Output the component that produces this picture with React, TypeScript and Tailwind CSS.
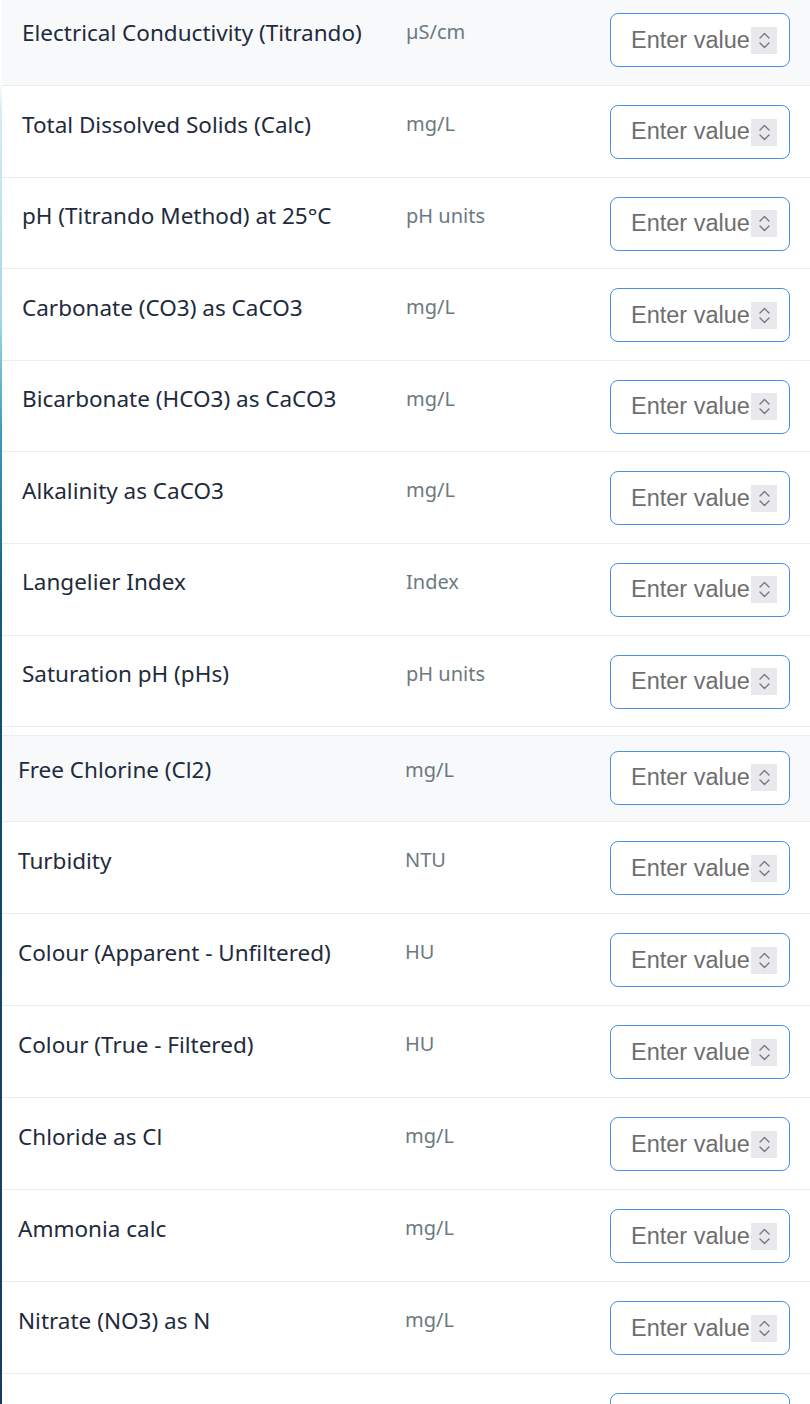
const groupOne: [string, string][] = [
  ['Electrical Conductivity (Titrando)', 'µS/cm'],
  ['Total Dissolved Solids (Calc)', 'mg/L'],
  ['pH (Titrando Method) at 25°C', 'pH units'],
  ['Carbonate (CO3) as CaCO3', 'mg/L'],
  ['Bicarbonate (HCO3) as CaCO3', 'mg/L'],
  ['Alkalinity as CaCO3', 'mg/L'],
  ['Langelier Index', 'Index'],
  ['Saturation pH (pHs)', 'pH units'],
];

const groupTwo: [string, string][] = [
  ['Free Chlorine (Cl2)', 'mg/L'],
  ['Turbidity', 'NTU'],
  ['Colour (Apparent - Unfiltered)', 'HU'],
  ['Colour (True - Filtered)', 'HU'],
  ['Chloride as Cl', 'mg/L'],
  ['Ammonia calc', 'mg/L'],
  ['Nitrate (NO3) as N', 'mg/L'],
  ['Nitrite (NO2) as N', 'mg/L'],
];

const Spinner = () => (
  <span className="flex h-[27px] w-[26px] shrink-0 flex-col items-center justify-center gap-[3px] bg-[#e9e9ed]">
    <svg width="11" height="7" viewBox="0 0 11 7" fill="none">
      <path d="M1 6 L5.5 1.5 L10 6" stroke="#77777f" strokeWidth="1.4" strokeLinecap="round" strokeLinejoin="round" />
    </svg>
    <svg width="11" height="7" viewBox="0 0 11 7" fill="none">
      <path d="M1 1 L5.5 5.5 L10 1" stroke="#77777f" strokeWidth="1.4" strokeLinecap="round" strokeLinejoin="round" />
    </svg>
  </span>
);

const ValueInput = ({ className }: { className: string }) => (
  <div
    className={`ml-auto mr-[20px] flex h-[54px] w-[180px] shrink-0 items-center rounded-[8px] border-[1.5px] border-[#4a8fe0] bg-white pl-[20px] pr-[12px] ${className}`}
  >
    <input
      type="text"
      placeholder="Enter value"
      className="w-full min-w-0 bg-transparent font-['Liberation_Sans',Arial,sans-serif] text-[23.5px] text-[#333] outline-none placeholder:text-[#6e6e6e]"
    />
    <Spinner />
  </div>
);

export default function App() {
  return (
    <div className="flex h-[1404px] w-[810px] overflow-hidden bg-white font-['Noto_Sans',sans-serif]">
      <div className="w-[2px] shrink-0 bg-[linear-gradient(to_bottom,transparent_0px,transparent_80px,#d6edf4_110px,#9fd8e6_320px,#3d9cc0_430px,#125a82_600px,#0f4a70_800px,#163b5e_1404px)]" />

      <div className="-mt-[5.6px] flex-1">
        {groupOne.map(([label, unit], i) => (
          <div
            key={label}
            className={`flex h-[91.6px] items-start border-b-[1.5px] border-[#e8edf0] ${i === 0 ? 'bg-[#f7f9fb]' : 'bg-white'}`}
          >
            <div className="w-[404px] shrink-0 pl-[20px] pt-[23.5px] text-[22.5px] leading-[30px] text-[#1e2b3c]">{label}</div>
            <div className="pt-[24px] text-[20px] leading-[28px] text-[#6c7a80]">{unit}</div>
            <ValueInput className="mt-[19px]" />
          </div>
        ))}

        <div className="mt-[7.8px] border-t-[1.5px] border-[#e8edf0]">
          {groupTwo.map(([label, unit], i) => (
            <div
              key={label}
              className={`flex items-start border-b-[1.5px] border-[#e8edf0] ${i === 0 ? 'h-[86.5px] bg-[#f7f9fb]' : 'h-[92px] bg-white'}`}
            >
              <div
                className={`w-[403px] shrink-0 pl-[16px] text-[22.5px] leading-[30px] text-[#1e2b3c] ${i === 0 ? 'pt-[19.5px]' : 'pt-[23.5px]'}`}
              >
                {label}
              </div>
              <div className={`text-[20px] leading-[28px] text-[#6c7a80] ${i === 0 ? 'pt-[20px]' : 'pt-[24px]'}`}>{unit}</div>
              <ValueInput className={i === 0 ? 'mt-[15px]' : 'mt-[19px]'} />
            </div>
          ))}
        </div>
      </div>
    </div>
  );
}
